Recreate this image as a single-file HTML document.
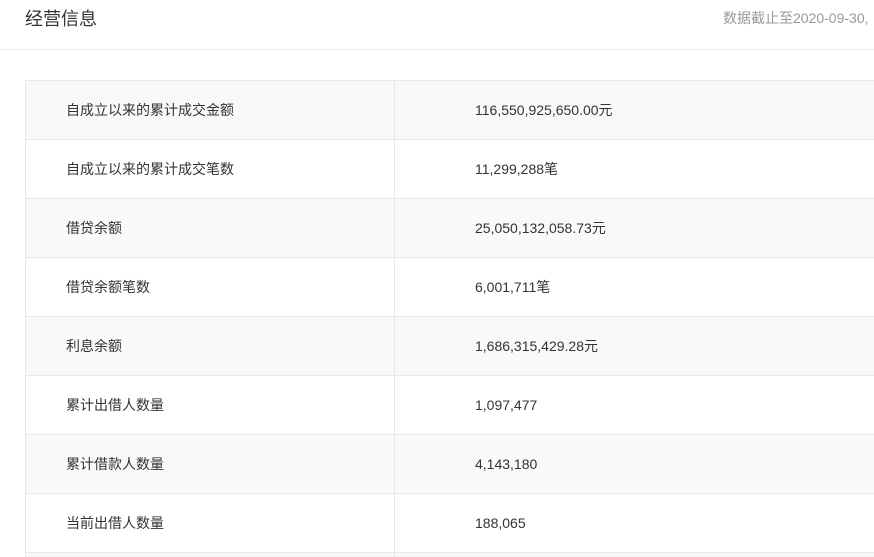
<!DOCTYPE html>
<html><head><meta charset="utf-8"><style>
*{margin:0;padding:0;box-sizing:border-box}
html,body{width:874px;height:557px;overflow:hidden}
body{background:#fff;font-family:"Liberation Sans","Noto Sans CJK SC",sans-serif;color:#333;position:relative}
.hd{position:absolute;left:0;top:0;width:874px;height:50px;border-bottom:1px solid #ebebeb}
.t{position:absolute;left:25px;top:7px;font-size:18px;color:#333;line-height:24px}
.d{position:absolute;left:723px;top:9px;font-size:14px;color:#999;white-space:nowrap;line-height:18px;width:151px;overflow:hidden}
table{position:absolute;left:25px;top:80px;width:849px;border-collapse:collapse}
td{height:59px;border:1px solid #e8e8e8;border-right:none;font-size:14px;line-height:18px}
td.a{width:369px;padding-left:40px;border-right:1px solid #e8e8e8}
td.b{padding-left:80px}
tr:nth-child(odd) td{background:#f9f9f9}
tr.last td{height:4px;border-bottom:none}
</style></head><body>
<div class="hd"><div class="t">经营信息</div><div class="d">数据截止至2020-09-30,</div></div>
<table>
<tr><td class="a">自成立以来的累计成交金额</td><td class="b">116,550,925,650.00元</td></tr>
<tr><td class="a">自成立以来的累计成交笔数</td><td class="b">11,299,288笔</td></tr>
<tr><td class="a">借贷余额</td><td class="b">25,050,132,058.73元</td></tr>
<tr><td class="a">借贷余额笔数</td><td class="b">6,001,711笔</td></tr>
<tr><td class="a">利息余额</td><td class="b">1,686,315,429.28元</td></tr>
<tr><td class="a">累计出借人数量</td><td class="b">1,097,477</td></tr>
<tr><td class="a">累计借款人数量</td><td class="b">4,143,180</td></tr>
<tr><td class="a">当前出借人数量</td><td class="b">188,065</td></tr>
<tr class="last"><td class="a"></td><td class="b"></td></tr>
</table>
</body></html>
